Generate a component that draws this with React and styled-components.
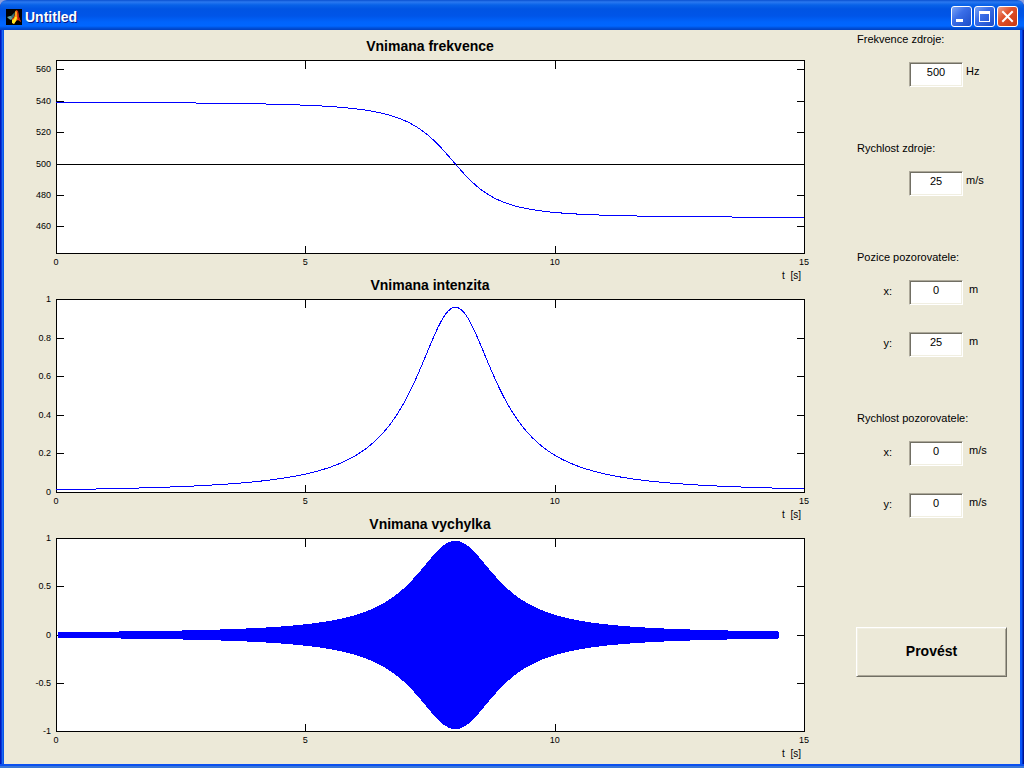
import styled, { createGlobalStyle } from "styled-components";
import { useState } from "react";

const GlobalStyle = createGlobalStyle`
    * {
        box-sizing: border-box;
    }
    body {
        margin: 0;
        background: #8c9fdc;
        color: #000;
        font-family: "Liberation Sans", Arial, sans-serif;
        font-size: 11px;
    }
`
const StyledWindow = styled.div`
    background:
        linear-gradient(#0a50f0 0 2px, #3a78d8 2px 4px) bottom / 100% 4px no-repeat,
        linear-gradient(90deg, #0019b8 0 1px, #0837dc 1px 2px, #1a6af0 2px 3px, #0855e8 3px 4px) left / 4px 100% no-repeat,
        linear-gradient(90deg, #0855f8 0 2px, #0030c8 2px 3px, #001490 3px 4px) right / 4px 100% no-repeat;
    border-radius: 7px 7px 0 0;
    display: flex;
        flex-direction: column;
    min-height: 100vh;
    overflow: hidden;
    padding: 0 4px 4px;
`
const StyledTitleBar = styled.header`
    background: linear-gradient(#0a50d0 0, #2a78f0 2px, #0862e8 5px, #0054e3 9px, #0055e8 16px, #0064fc 22px, #0066ff 26px, #0050d8 28px, #0040c0 30px);
    display: flex;
        align-items: center;
        gap: 3px;
    height: 30px;
    margin: 0 -4px;
    padding: 3px 6px 0;
`
const StyledTitle = styled.h1`
    color: #fff;
    flex: 1;
    font-size: 14px;
    line-height: 16px;
    margin: 0;
    text-shadow: 1px 1px 0 #0a1883;
`
const StyledCaptionButtons = styled.div`
    display: flex;
        gap: 2px;
`
const StyledCaptionButton = styled.button`
    background: ${({ $close }) => $close
        ? "linear-gradient(135deg, #f0a088 0, #e0522c 40%, #c83810 100%)"
        : "linear-gradient(135deg, #7ca4f4 0, #3a6ee8 40%, #1c4cc8 100%)"};
    border: 1px solid #fff;
    border-radius: 3px;
    display: flex;
        align-items: center;
        justify-content: center;
    height: 21px;
    padding: 0;
    width: 21px;
`
const StyledContent = styled.main`
    background: #ece9d8;
    display: flex;
        flex: 1;
        gap: 52px;
`
const StyledCharts = styled.div`
    display: flex;
        flex: 1;
        flex-direction: column;
    min-width: 0;
    padding: 6px 0 11px 52px;
`
const StyledFigure = styled.section`
    display: flex;
        flex: 1;
        flex-direction: column;
    padding-bottom: 22px;
`
const StyledFigureTitle = styled.h2`
    font-size: 14px;
    line-height: 20px;
    margin: 0 0 4px;
    text-align: center;
`
const StyledPlot = styled.svg`
    display: block;
    flex: 1;
    font-size: 9px;
    min-height: 120px;
    overflow: visible;
    width: 100%;
`
const StyledUnitText = styled.text`
    font-size: 10px;
    white-space: pre;
`
const StyledPanel = styled.form`
    display: flex;
        flex-direction: column;
        gap: 53px;
    padding: 1px 13px 0 0;
    width: 164px;
`
const StyledGroup = styled.div`
    display: flex;
        flex-direction: column;
        gap: 15px;
`
const StyledHeading = styled.label`
    line-height: 16px;
    padding-left: 1px;
`
const StyledRows = styled.div`
    display: flex;
        flex-direction: column;
        gap: 27px;
`
const StyledRow = styled.div`
    align-items: center;
    display: grid;
        grid-template-columns: 53px 54px 1fr;
`
const StyledAxisLabel = styled.label`
    grid-column: 1;
    padding: 0 17px 4px 0;
    text-align: right;
`
const StyledInput = styled.input`
    background: #fff;
    border: 1px solid;
    border-color: #aca899 #fff #fff #aca899;
    border-radius: 0;
    box-shadow: inset 1px 1px 0 #716f64, inset -1px -1px 0 #f1efe2;
    font: inherit;
    grid-column: 2;
    height: 25px;
    outline: none;
    padding: 0 0 6px;
    text-align: center;
    width: 100%;
`
const StyledUnit = styled.span`
    padding: 0 0 8px ${({ $wide }) => $wide ? "6px" : "3px"};
`
const StyledSubmit = styled.button`
    background: #ece9d8;
    border: 1px solid;
    border-color: #fff #716f64 #716f64 #fff;
    border-radius: 0;
    box-shadow: inset 1px 1px 0 #f1efe2, inset -1px -1px 0 #aca899;
    color: #000;
    font: bold 14px "Liberation Sans", Arial, sans-serif;
    height: 50px;
    margin-top: 56px;
    padding: 0 0 2px;
    width: 100%;
`

const DURATION = 15;
const PASS_TIME = 8;
const SOUND_SPEED = 340;
const SOURCE_SPEED = 25;
const SOURCE_FREQUENCY = 500;

function frequency(t) {
    const tau = t - PASS_TIME;
    const radial = SOURCE_SPEED * tau / Math.sqrt(1 + tau * tau);
    return SOURCE_FREQUENCY / (1 + radial / SOUND_SPEED);
}

function intensity(t) {
    const tau = t - PASS_TIME;
    return 0.96 / (1 + tau * tau);
}

function sample(fn, from, to) {
    const points = [];
    const steps = 300;
    for (let i = 0; i <= steps; i++) {
        const t = from + (to - from) * i / steps;
        points.push([t, fn(t)]);
    }
    return points;
}

const frequencyCurve = sample(frequency, 0, DURATION);
const intensityCurve = sample(intensity, 0, DURATION);
const upper = sample(intensity, 0.06, 14.46);
const envelope = [...upper, ...upper.map(([t, v]) => [t, -v]).reverse()];

const figures = [
    {
        title: "Vnimana frekvence",
        min: 443,
        max: 566,
        ticks: [560, 540, 520, 500, 480, 460],
        curve: frequencyCurve,
        baseline: 500
    },
    {
        title: "Vnimana intenzita",
        min: 0,
        max: 1,
        ticks: [1, 0.8, 0.6, 0.4, 0.2, 0],
        curve: intensityCurve
    },
    {
        title: "Vnimana vychylka",
        min: -1,
        max: 1,
        ticks: [1, 0.5, 0, -0.5, -1],
        curve: envelope,
        filled: true
    }
]

const groups = [
    { name: "frekvence", title: "Frekvence zdroje:", fields: [{ value: "500", unit: "Hz" }] },
    { name: "rychlost", title: "Rychlost zdroje:", fields: [{ value: "25", unit: "m/s" }] },
    {
        name: "pozice",
        title: "Pozice pozorovatele:",
        fields: [{ axis: "x", value: "0", unit: "m" }, { axis: "y", value: "25", unit: "m" }]
    },
    {
        name: "pohyb",
        title: "Rychlost pozorovatele:",
        fields: [{ axis: "x", value: "0", unit: "m/s" }, { axis: "y", value: "0", unit: "m/s" }]
    }
]

function Figure({ title, min, max, ticks, curve, baseline, filled }) {
    const percent = (value) => `${(max - value) / (max - min) * 100}%`;
    const points = curve.map(([t, v]) => `${t},${max - v}`).join(" ");
    return (
        <StyledFigure>
            <StyledFigureTitle>{title}</StyledFigureTitle>
            <StyledPlot height="193">
                <g transform="translate(0.5 0.5)" shapeRendering="crispEdges" stroke="#000" fill="none">
                    <rect width="100%" height="100%" fill="#fff" />
                    {baseline && <line x1="0" x2="100%" y1={percent(baseline)} y2={percent(baseline)} />}
                    {ticks.map((tick) => (
                        <g key={tick}>
                            <line x1="0" x2="7" y1={percent(tick)} y2={percent(tick)} />
                            <svg x="100%" overflow="visible">
                                <line x1="-8" x2="0" y1={percent(tick)} y2={percent(tick)} />
                            </svg>
                        </g>
                    ))}
                    {[5, 10].map((t) => (
                        <g key={t}>
                            <line x1={`${t / DURATION * 100}%`} x2={`${t / DURATION * 100}%`} y1="0" y2="8" />
                            <svg y="100%" overflow="visible">
                                <line x1={`${t / DURATION * 100}%`} x2={`${t / DURATION * 100}%`} y1="-8" y2="0" />
                            </svg>
                        </g>
                    ))}
                    <svg viewBox={`0 0 ${DURATION} ${max - min}`} preserveAspectRatio="none" overflow="visible">
                        {filled
                            ? <polygon points={points} fill="#00f" stroke="#00f" strokeWidth="3" strokeLinejoin="round" vectorEffect="non-scaling-stroke" />
                            : <polyline points={points} stroke="#00f" vectorEffect="non-scaling-stroke" />}
                    </svg>
                </g>
                {ticks.map((tick) => (
                    <text key={tick} x="-5" y={percent(tick)} dy="3" textAnchor="end">{tick}</text>
                ))}
                {[0, 5, 10, 15].map((t) => (
                    <text key={t} x={`${t / DURATION * 100}%`} y="100%" dy="12" textAnchor="middle">{t}</text>
                ))}
                <StyledUnitText x="100%" y="100%" dx="-3" dy="26" textAnchor="end">{"t  [s]"}</StyledUnitText>
            </StyledPlot>
        </StyledFigure>
    )
}

function Logo() {
    return (
        <svg width="16" height="16" viewBox="0 0 16 16">
            <rect width="16" height="16" fill="#000" />
            <path d="M1 8L4 7L6 7L7 9L5 11L3 10Z" fill="#5f9a9a" />
            <path d="M5 7L9 3L8 8L6 9Z" fill="#35706f" />
            <path d="M6 10L8 8L10 1L12 2L13 8L15 13L12 11L10 12L8 15L6 13Z" fill="#e8480c" />
            <path d="M6 11L8 10L10 4L11 9L10 12L8 15L6 14Z" fill="#ffe820" />
            <path d="M9 2L11 3L11 8L9 8Z" fill="#f8a020" />
            <path d="M11 2L12 3L13 8L15 13L12 10Z" fill="#b81c08" />
        </svg>
    )
}

function App() {
    const [values, setValues] = useState(() => groups.map((group) => group.fields.map((field) => field.value)));
    const update = (g, f, value) => {
        setValues(values.map((row, i) => i === g ? row.map((old, j) => j === f ? value : old) : row));
    }
    return (
        <>
            <GlobalStyle />
            <StyledWindow>
                <StyledTitleBar>
                    <Logo />
                    <StyledTitle>Untitled</StyledTitle>
                    <StyledCaptionButtons>
                        <StyledCaptionButton type="button" aria-label="Minimize">
                            <svg width="19" height="19"><rect x="4" y="12" width="7" height="3" fill="#fff" /></svg>
                        </StyledCaptionButton>
                        <StyledCaptionButton type="button" aria-label="Maximize">
                            <svg width="19" height="19" shapeRendering="crispEdges">
                                <path d="M4 4H15V15H4ZM5 7V14H14V7Z" fill="#fff" fillRule="evenodd" />
                            </svg>
                        </StyledCaptionButton>
                        <StyledCaptionButton type="button" aria-label="Close" $close>
                            <svg width="19" height="19">
                                <path d="M5 5L14 14M14 5L5 14" stroke="#fff" strokeWidth="2" strokeLinecap="square" />
                            </svg>
                        </StyledCaptionButton>
                    </StyledCaptionButtons>
                </StyledTitleBar>
                <StyledContent>
                    <StyledCharts>
                        {figures.map((figure) => <Figure key={figure.title} {...figure} />)}
                    </StyledCharts>
                    <StyledPanel onSubmit={(e) => e.preventDefault()}>
                        {groups.map((group, g) => (
                            <StyledGroup key={group.name}>
                                <StyledHeading htmlFor={`${group.name}-0`}>{group.title}</StyledHeading>
                                <StyledRows>
                                    {group.fields.map((field, f) => (
                                        <StyledRow key={f}>
                                            {field.axis && (
                                                <StyledAxisLabel htmlFor={`${group.name}-${f}`}>{field.axis}:</StyledAxisLabel>
                                            )}
                                            <StyledInput
                                                id={`${group.name}-${f}`}
                                                value={values[g][f]}
                                                onChange={(e) => update(g, f, e.target.value)}
                                            />
                                            <StyledUnit $wide={Boolean(field.axis)}>{field.unit}</StyledUnit>
                                        </StyledRow>
                                    ))}
                                </StyledRows>
                            </StyledGroup>
                        ))}
                        <StyledSubmit type="submit">Provést</StyledSubmit>
                    </StyledPanel>
                </StyledContent>
            </StyledWindow>
        </>
    )
}

export default App;
